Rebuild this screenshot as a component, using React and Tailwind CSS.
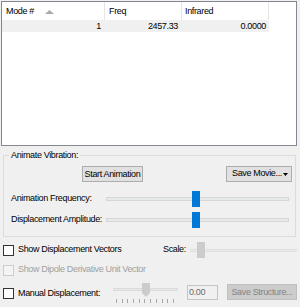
import React from 'react';

// small WinForms-like helpers
function CheckBox({ disabled }) {
  return (
    <span
      className={
        'block w-[11px] h-[11px] shrink-0 border ' +
        (disabled ? 'border-[#cccccc] bg-[#f4f4f4]' : 'border-[#333333] bg-white')
      }
    />
  );
}

function Slider({ width, thumbLeft }) {
  return (
    <div className={'relative h-[16px] ' + width}>
      <div className="mt-[6px] h-[4px] border border-[#d6d6d6] bg-[#e7eaea]" />
      <div className={'absolute top-0 w-[8px] h-[16px] bg-[#0078d7] ' + thumbLeft} />
    </div>
  );
}

export default function App() {
  return (
    <div className="w-[300px] h-[307px] overflow-hidden bg-[#f0f0f0] text-[9px] tracking-[-0.35px] text-black font-['Liberation_Sans',Arial,sans-serif]">
      {/* results list */}
      <div className="mt-px ml-px w-[296px] h-[145px] border border-[#828790] bg-white">
        <div className="flex h-[18px] leading-[18px]">
          <div className="relative w-[103px] border-r border-[#e5e5e5] pl-[4px]">
            Mode #
            <svg className="absolute left-[43px] top-[8px]" width="9" height="4" viewBox="0 0 9 4">
              <polygon points="0,4 4.5,0 9,4" fill="#a9a9a9" />
            </svg>
          </div>
          <div className="w-[77px] border-r border-[#e5e5e5] pl-[4px]">Freq</div>
          <div className="w-[87px] border-r border-[#e5e5e5] pl-[3px]">Infrared</div>
        </div>
        <div className="flex h-[12px] leading-[12px] w-[267px] bg-[#f0f0f0]">
          <div className="w-[103px] pr-[4px] text-right">1</div>
          <div className="w-[77px] pr-[4px] text-right">2457.33</div>
          <div className="w-[87px] pr-[3px] text-right">0.0000</div>
        </div>
      </div>

      {/* Animate Vibration group */}
      <fieldset className="mt-[4px] ml-[3px] w-[293px] border border-[#dcdcdc] pb-[8px]">
        <legend className="ml-[5px] px-[2px] leading-[11px]">Animate Vibration:</legend>
        <div className="flex mt-[5px]">
          <button className="ml-[78px] w-[61px] h-[16px] border border-[#adadad] bg-[#e1e1e1] leading-[14px]">
            Start Animation
          </button>
          <button className="ml-auto mr-[3px] w-[66px] h-[16px] border border-[#adadad] bg-[#e1e1e1] flex items-center pl-[5px]">
            <span>Save Movie...</span>
            <svg className="ml-auto mr-[3px]" width="5" height="3" viewBox="0 0 5 3">
              <polygon points="0,0 5,0 2.5,3" fill="#000" />
            </svg>
          </button>
        </div>
        <div className="flex items-center mt-[9px]">
          <span className="w-[102px] pl-[7px]">Animation Frequency:</span>
          <Slider width="w-[183px]" thumbLeft="left-[86px]" />
        </div>
        <div className="flex items-center mt-[5px]">
          <span className="w-[102px] pl-[7px]">Displacement Amplitude:</span>
          <Slider width="w-[183px]" thumbLeft="left-[86px]" />
        </div>
      </fieldset>

      {/* options */}
      <div className="flex items-center h-[18px] mt-[4px] pl-[3px]">
        <CheckBox />
        <span className="ml-[4px] w-[145px]">Show Displacement Vectors</span>
        <span className="w-[27px]">Scale:</span>
        <div className="relative w-[107px] h-[18px]">
          <div className="mt-[8px] h-[3px] bg-[#e7eaea] border-y border-[#e0e0e0]" />
          <div className="absolute top-px left-[7px] w-[8px] h-[16px] bg-[#cccccc]" />
        </div>
      </div>

      <div className="flex items-center h-[12px] mt-[5px] pl-[3px] text-[#a0a0a0]">
        <CheckBox disabled />
        <span className="ml-[4px]">Show Dipole Derivative Unit Vector</span>
      </div>

      <div className="flex items-start h-[22px] mt-[7px] pl-[3px]">
        <div className="mt-[5px]">
          <CheckBox />
        </div>
        <span className="ml-[4px] mt-[4px] w-[95px]">Manual Displacement:</span>
        <div className="relative w-[65px] h-[22px]">
          <div className="mt-[5px] h-[3px] bg-[#e7eaea] border-y border-[#dadada]" />
          <svg className="absolute top-0 left-[29px]" width="8" height="14" viewBox="0 0 8 14">
            <polygon points="0,0 8,0 8,10 4,14 0,10" fill="#cccccc" />
          </svg>
          <div className="flex justify-between mt-[8px] ml-[3px] mr-[4px]">
            {Array.from({ length: 11 }).map((_, i) => (
              <span key={i} className="block w-px h-[4px] bg-[#a8a8a8]" />
            ))}
          </div>
        </div>
        <div className="ml-[9px] mt-[2px] w-[31px] h-[15px] border border-[#c4c4c4] bg-[#f0f0f0] pl-[1px] leading-[13px] text-[#6d6d6d]">
          0.00
        </div>
        <button className="ml-[9px] mt-px w-[70px] h-[16px] border border-[#bfbfbf] bg-[#cccccc] leading-[14px] text-[#838383]">
          Save Structure...
        </button>
      </div>

      <div className="mt-[2px] w-[296px] h-px bg-[#b4b4b4]" />
    </div>
  );
}
